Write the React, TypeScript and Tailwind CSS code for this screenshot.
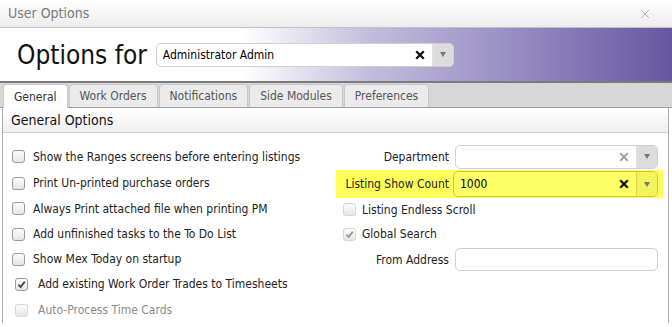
import React from "react";

const LEFT_ROWS: { label: string; checked?: boolean; disabled?: boolean; h: number; indent?: boolean }[] = [
  { label: "Show the Ranges screens before entering listings", h: 27 },
  { label: "Print Un-printed purchase orders", h: 26 },
  { label: "Always Print attached file when printing PM", h: 25 },
  { label: "Add unfinished tasks to the To Do List", h: 26 },
  { label: "Show Mex Today on startup", h: 24 },
  { label: "Add existing Work Order Trades to Timesheets", checked: true, h: 26, indent: true },
  { label: "Auto-Process Time Cards", disabled: true, h: 26, indent: true },
];

const TABS = ["General", "Work Orders", "Notifications", "Side Modules", "Preferences"];

function Check({ checked, disabled }: { checked?: boolean; disabled?: boolean }) {
  return (
    <span
      className={
        "flex h-[13px] w-[13px] shrink-0 items-center justify-center rounded-[3px] border bg-[linear-gradient(#fdfdfd,#e6e6e6)] " +
        (disabled ? "border-[#d6d6d6]" : "border-[#9a9a9a]")
      }
    >
      {checked && (
        <svg viewBox="0 0 10 10" className="h-[9px] w-[9px]">
          <path d="M1.5 5.2 L4 7.8 L8.6 1.8" fill="none" stroke={disabled ? "#999" : "#444"} strokeWidth="2" />
        </svg>
      )}
    </span>
  );
}

function Combo({ value, bold, yellow, width }: { value?: string; bold?: boolean; yellow?: boolean; width: string }) {
  return (
    <div
      className={
        "flex items-stretch overflow-hidden rounded-[5px] border " +
        (yellow ? "h-[26px] border-[#c9c93a] bg-[#ffff66] " : "h-[24px] border-[#cfcfcf] bg-white ") +
        width
      }
    >
      <div className="flex flex-1 items-center pl-[6px] text-[12px] text-black">{value}</div>
      <div className="flex w-[24px] items-center justify-center">
        <svg viewBox="0 0 10 10" className="h-[10px] w-[10px]">
          <path d="M1.2 1.2 L8.8 8.8 M8.8 1.2 L1.2 8.8" stroke={bold ? "#111" : "#9a9a9a"} strokeWidth={bold ? 2.3 : 1.8} />
        </svg>
      </div>
      <div
        className={
          "flex w-[21px] items-center justify-center border-l " +
          (yellow ? "border-[#d4d44a] bg-[#f3f35c]" : "border-[#e0e0e0] bg-[#dcdcdc]")
        }
      >
        <span className="border-x-[3.5px] border-t-[5px] border-x-transparent border-t-[#777]" />
      </div>
    </div>
  );
}

export default function App() {
  return (
    <div className="h-[327px] w-[672px] overflow-hidden bg-white font-['DejaVu_Sans_Condensed','DejaVu_Sans',sans-serif] text-[12px] text-[#222]">
      {/* window title */}
      <div className="flex h-[28px] items-center justify-between border-b border-[#c4c4c4] bg-[linear-gradient(#ffffff,#ececec)] pl-[8px] pr-[22px]">
        <span className="text-[14px] text-[#7a7a7a]">User Options</span>
        <svg viewBox="0 0 10 10" className="h-[10px] w-[10px]">
          <path d="M1 1 L9 9 M9 1 L1 9" stroke="#b5b5b5" strokeWidth="1" />
        </svg>
      </div>

      {/* header */}
      <div className="flex h-[55px] items-center border-b-2 border-[#7b7b7b] bg-[linear-gradient(to_right,#ffffff_36%,#c3bddc_55%,#9a90c5_75%,#6656a0)] pl-[17px]">
        <span className="mr-[9px] text-[26px] leading-none text-[#111]">Options for</span>
        <Combo value="Administrator Admin" bold width="w-[298px]" />
      </div>

      {/* tabs */}
      <div className="flex h-[25px] items-end gap-[1px] border-b border-[#9c9c9c] bg-[#d7d7d7] pl-[3px]">
        {TABS.map((t, i) => (
          <div
            key={t}
            className={
              "flex h-[23px] items-center rounded-t-[4px] border border-b-0 border-[#c8c8c8] px-[10px] text-[12px] " +
              (i === 0 ? "mb-[-1px] h-[24px] bg-white text-[#333]" : "bg-[#ebebeb] text-[#555]")
            }
          >
            {t}
          </div>
        ))}
      </div>

      {/* panel */}
      <div className="ml-[2px] mr-[3px] border-x border-[#a9a9a9]">
        <div className="flex h-[25px] items-center border-b border-[#d2d2d2] bg-[linear-gradient(#ffffff,#efefef)] pl-[8px] text-[14px] text-[#111]">
          General Options
        </div>

        <div className="flex pt-[10px]">
          <div className="flex w-[333px] flex-col pl-[9px]">
            {LEFT_ROWS.map((r) => (
              <div key={r.label} className="flex items-center" style={{ height: r.h }}>
                <span className={r.indent ? "ml-[3px]" : ""}>
                  <Check checked={r.checked} disabled={r.disabled} />
                </span>
                <span className={(r.indent ? "ml-[10px] " : "ml-[8px] ") + (r.disabled ? "text-[#8a8a8a]" : "")}>
                  {r.label}
                </span>
              </div>
            ))}
          </div>

          <div className="flex w-[327px] flex-col">
            <div className="flex h-[27px] items-center">
              <span className="w-[119px] pr-[6px] text-right">Department</span>
              <Combo width="w-[203px]" />
            </div>
            <div className="flex h-[28px] items-center bg-[#ffff59]">
              <span className="w-[117px] pr-[4px] text-right">Listing Show Count</span>
              <Combo value="1000" bold yellow width="w-[205px]" />
            </div>
            <div className="flex h-[23px] items-center pl-[7px]">
              <Check disabled />
              <span className="ml-[6px]">Listing Endless Scroll</span>
            </div>
            <div className="flex h-[26px] items-center pl-[7px]">
              <Check checked disabled />
              <span className="ml-[6px]">Global Search</span>
            </div>
            <div className="flex h-[25px] items-center">
              <span className="w-[119px] pr-[6px] text-right">From Address</span>
              <div className="h-[23px] w-[203px] rounded-[5px] border border-[#cfcfcf] bg-white" />
            </div>
          </div>
        </div>
      </div>
    </div>
  );
}
